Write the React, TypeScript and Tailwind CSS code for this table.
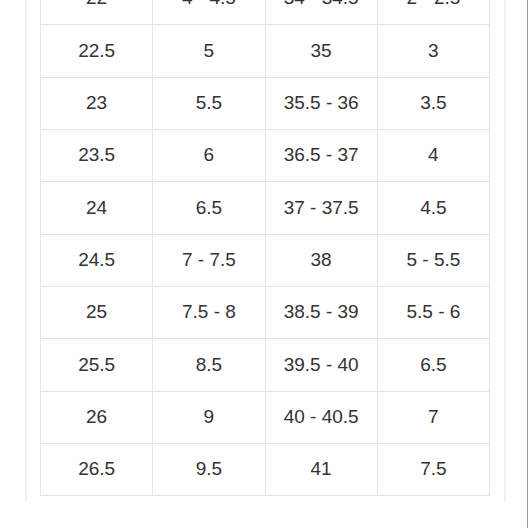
const rows: string[][] = [
  ["22", "4 - 4.5", "34 - 34.5", "2 - 2.5"],
  ["22.5", "5", "35", "3"],
  ["23", "5.5", "35.5 - 36", "3.5"],
  ["23.5", "6", "36.5 - 37", "4"],
  ["24", "6.5", "37 - 37.5", "4.5"],
  ["24.5", "7 - 7.5", "38", "5 - 5.5"],
  ["25", "7.5 - 8", "38.5 - 39", "5.5 - 6"],
  ["25.5", "8.5", "39.5 - 40", "6.5"],
  ["26", "9", "40 - 40.5", "7"],
  ["26.5", "9.5", "41", "7.5"],
];

export default function App() {
  return (
    <div
      className="h-[528px] w-[528px] overflow-hidden bg-white border-r border-[#9a9a9a]"
      style={{ fontFamily: '"Liberation Sans", Arial, sans-serif' }}
    >
      <div className="ml-[25px] w-[481px] h-full border-x-2 border-[#efefef] px-[13px]">
        <div className="mt-[-27px] w-[450px] border-l border-[#e4e4e4]">
          {rows.map((row, i) => (
            <div key={i} className="grid grid-cols-4 h-[52.33px] border-b border-[#e4e4e4]">
              {row.map((cell, j) => (
                <div
                  key={j}
                  className="flex items-center justify-center border-r border-[#e4e4e4] text-[19px] text-[#333333]"
                >
                  {cell}
                </div>
              ))}
            </div>
          ))}
        </div>
      </div>
    </div>
  );
}
